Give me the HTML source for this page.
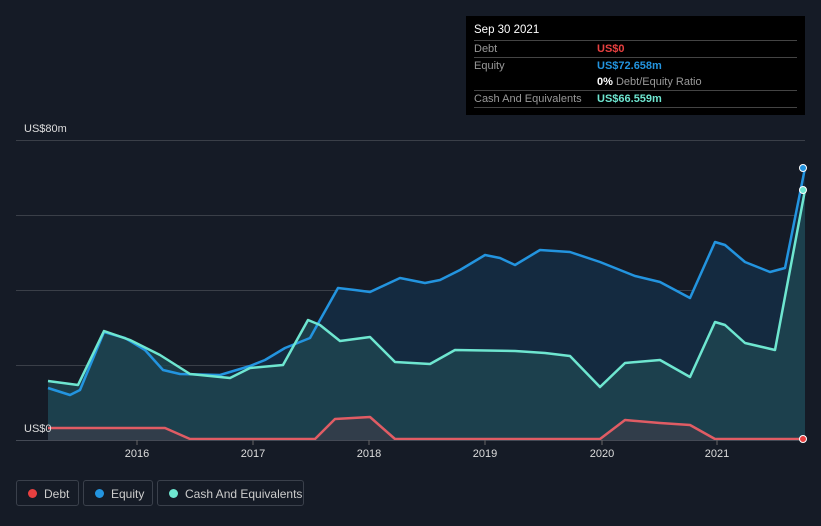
<!DOCTYPE html>
<html><head><meta charset="utf-8"><style>
body{margin:0;background:#151b26;width:821px;height:526px;overflow:hidden;font-family:"Liberation Sans",sans-serif}
svg{position:absolute;left:0;top:0}
.tip{position:absolute;left:466px;top:16px;width:339px;height:99px;background:#000;font-size:11px;color:#999}
.tip .h{position:absolute;left:8px;top:8px;color:#fff;font-size:11.5px}
.row{position:absolute;left:8px;width:323px;border-top:1px solid #444;height:16px;line-height:16px}
.row span{position:absolute;left:123px;font-weight:bold}
.leg{position:absolute;top:480px;height:26px;border:1px solid #3a404b;border-radius:3px;color:#ccc;font-size:12px;line-height:26px;box-sizing:border-box;padding-left:27px}
.leg i{position:absolute;left:11px;top:8px;width:9px;height:9px;border-radius:50%}
</style></head><body>
<svg width="821" height="526">
<defs>
<linearGradient id="g" x1="0" y1="0" x2="0" y2="1"><stop offset="0" stop-color="#1a4266" stop-opacity=".8"/><stop offset="1" stop-color="#1a3040" stop-opacity=".6"/></linearGradient>
</defs>
<g stroke="#3a3f48" stroke-width="1"><line x1="16" y1="140.5" x2="805" y2="140.5"/><line x1="16" y1="215.5" x2="805" y2="215.5"/><line x1="16" y1="290.5" x2="805" y2="290.5"/><line x1="16" y1="365.5" x2="805" y2="365.5"/></g>
<polygon fill="#142a40" points="48,388 70,395 80,390 104,332 125,338 145,350 163,370 180,374 220,375 250,366 265,360 285,348 310,338 320,320 338,288 355,290 370,292 385,285 400,278 425,283 440,280 460,270 485,255 500,258 515,265 540,250 570,252 600,262 635,276 660,282 690,298 715,242 725,245 745,262 770,272 785,268 805,168 805,440 48,440"/>
<polygon fill="#1e4650" fill-opacity=".8" points="48,381 78,385 104,331 130,340 160,355 190,374 230,378 250,368 283,365 308,320 320,325 340,341 370,337 395,362 430,364 455,350 515,351 545,353 570,356 600,387 625,363 660,360 690,377 715,322 725,325 745,343 775,350 805,190 805,440 48,440"/>
<polygon fill="#3a3c48" fill-opacity=".7" points="48,428 165,428 190,439 315,439 335,419 370,417 395,439 600,439 625,420 660,423 690,425 715,439 805,439 805,440 48,440"/>
<g fill="none" stroke-width="2.5" stroke-linejoin="round">
<polyline stroke="#2394df" points="48,388 70,395 80,390 104,332 125,338 145,350 163,370 180,374 220,375 250,366 265,360 285,348 310,338 320,320 338,288 355,290 370,292 385,285 400,278 425,283 440,280 460,270 485,255 500,258 515,265 540,250 570,252 600,262 635,276 660,282 690,298 715,242 725,245 745,262 770,272 785,268 805,168"/>
<polyline stroke="#6ee6d0" points="48,381 78,385 104,331 130,340 160,355 190,374 230,378 250,368 283,365 308,320 320,325 340,341 370,337 395,362 430,364 455,350 515,351 545,353 570,356 600,387 625,363 660,360 690,377 715,322 725,325 745,343 775,350 805,190"/>
<polyline stroke="#e05c64" points="48,428 165,428 190,439 315,439 335,419 370,417 395,439 600,439 625,420 660,423 690,425 715,439 805,439"/>
</g>
<line x1="16" y1="440.5" x2="805" y2="440.5" stroke="#444a55"/>
<g stroke="#666"><line x1="137" y1="440" x2="137" y2="445"/><line x1="253" y1="440" x2="253" y2="445"/><line x1="369" y1="440" x2="369" y2="445"/><line x1="485" y1="440" x2="485" y2="445"/><line x1="602" y1="440" x2="602" y2="445"/><line x1="717" y1="440" x2="717" y2="445"/></g>
<circle cx="803" cy="168" r="3.5" fill="#2394df" stroke="#fff" stroke-width="1"/>
<circle cx="803" cy="190" r="3.5" fill="#6ee6d0" stroke="#fff" stroke-width="1"/>
<circle cx="803" cy="439" r="3.5" fill="#e84040" stroke="#fff" stroke-width="1"/>
<g fill="#ddd" font-family="Liberation Sans, sans-serif" font-size="11"><text x="24" y="132">US$80m</text><text x="24" y="432">US$0</text>
<g text-anchor="middle"><text x="137" y="457">2016</text><text x="253" y="457">2017</text><text x="369" y="457">2018</text><text x="485" y="457">2019</text><text x="602" y="457">2020</text><text x="717" y="457">2021</text></g></g>
</svg>
<div class="tip"><div class="h">Sep 30 2021</div>
<div class="row" style="top:24px">Debt<span style="color:#e84040">US$0</span></div>
<div class="row" style="top:41px">Equity<span style="color:#2394df">US$72.658m</span></div>
<div class="row" style="top:58px;border:none"><span style="color:#fff">0% <b style="color:#999;font-weight:normal">Debt/Equity Ratio</b></span></div>
<div class="row" style="top:74px">Cash And Equivalents<span style="color:#6ee6d0">US$66.559m</span></div>
<div class="row" style="top:91px;height:0"></div>
</div>
<div class="leg" style="left:16px;width:63px"><i style="background:#e84040"></i>Debt</div>
<div class="leg" style="left:83px;width:70px"><i style="background:#2394df"></i>Equity</div>
<div class="leg" style="left:157px;width:147px"><i style="background:#6ee6d0"></i>Cash And Equivalents</div>
</body></html>
